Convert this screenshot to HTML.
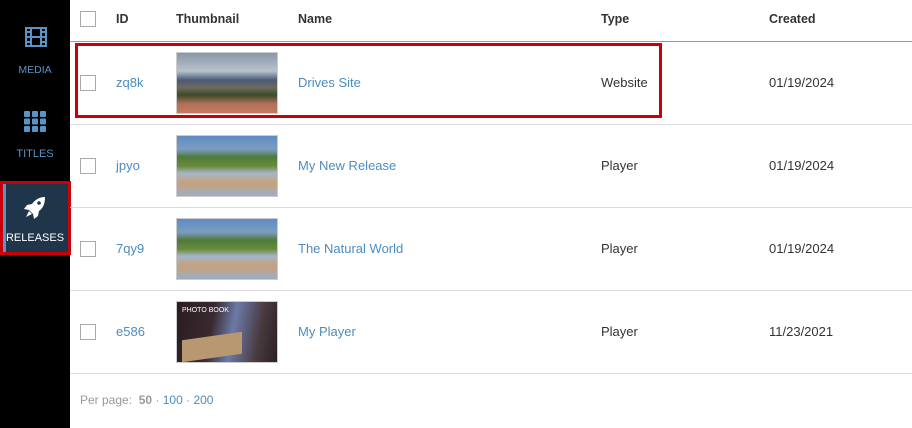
<!DOCTYPE html>
<html><head><style>
*{margin:0;padding:0;box-sizing:border-box}
body{width:912px;height:428px;overflow:hidden;background:#fff;font-family:"Liberation Sans",sans-serif;position:relative;font-size:13px;color:#333}
.sb{position:absolute;left:0;top:0;width:70px;height:428px;background:#000}
.lbl{position:absolute;width:70px;text-align:center;font-size:10.5px;color:#5b93c4}
.a{position:absolute}
.cb{position:absolute;left:80px;width:16px;height:16px;border:1px solid #aaa;background:#fff}
.link{color:#4c8cc0;position:absolute}
.hd{position:absolute;top:12px;font-weight:bold;font-size:12.5px;color:#333}
.line{position:absolute;left:70px;right:0;height:1px;background:#ddd}
.th{position:absolute;left:176px;width:102px;height:62px;border:1px solid #ccc}
.txt{position:absolute}
</style></head><body>
<div class="sb"></div>
<svg class="a" style="left:25px;top:27px" width="22" height="20" viewBox="0 0 22 20"><rect x="1" y="1" width="20" height="18" fill="none" stroke="#5b93c4" stroke-width="2"/><rect x="6" y="1" width="10" height="18" fill="none" stroke="#5b93c4" stroke-width="2"/><line x1="6" y1="10" x2="16" y2="10" stroke="#5b93c4" stroke-width="2"/><g fill="#5b93c4"><rect x="2" y="4" width="3" height="2"/><rect x="2" y="9" width="3" height="2"/><rect x="2" y="14" width="3" height="2"/><rect x="17" y="4" width="3" height="2"/><rect x="17" y="9" width="3" height="2"/><rect x="17" y="14" width="3" height="2"/></g></svg>
<div class="lbl" style="top:64px">MEDIA</div>
<svg class="a" style="left:24px;top:111px" width="22" height="21" viewBox="0 0 22 21" fill="#5b93c4"><rect x="0" y="0" width="6" height="6" rx="1"/><rect x="8" y="0" width="6" height="6" rx="1"/><rect x="16" y="0" width="6" height="6" rx="1"/><rect x="0" y="7.5" width="6" height="6" rx="1"/><rect x="8" y="7.5" width="6" height="6" rx="1"/><rect x="16" y="7.5" width="6" height="6" rx="1"/><rect x="0" y="15" width="6" height="6" rx="1"/><rect x="8" y="15" width="6" height="6" rx="1"/><rect x="16" y="15" width="6" height="6" rx="1"/></svg>
<div class="lbl" style="top:148px;font-size:11px">TITLES</div>
<div class="a" style="left:0;top:181px;width:71px;height:74px;border:3px solid #c8000a;background:#1f3549"></div>
<div class="a" style="left:3px;top:184px;width:3px;height:68px;background:#5b93c4"></div>
<svg class="a" style="left:23px;top:195px" width="24" height="24" viewBox="0 0 24 24"><path d="M22 2c-6 0-10 3-13 7l-5 1-3 4 5 1 4 4 1 5 4-3 1-5c4-3 6-7 6-14z" fill="#fff"/><circle cx="16" cy="8" r="1.8" fill="#1f3549"/><path d="M6 16l-3 6 6-3z" fill="#fff"/></svg>
<div class="lbl" style="top:232px;color:#fff;font-size:11px">RELEASES</div>

<div class="cb" style="top:11px"></div>
<div class="hd" style="left:116px">ID</div>
<div class="hd" style="left:176px">Thumbnail</div>
<div class="hd" style="left:298px">Name</div>
<div class="hd" style="left:601px">Type</div>
<div class="hd" style="left:769px">Created</div>
<div class="a" style="left:70px;right:0;top:41px;height:1px;background:#999"></div>

<div class="line" style="top:124px"></div>
<div class="line" style="top:207px"></div>
<div class="line" style="top:290px"></div>
<div class="line" style="top:373px"></div>

<div class="cb" style="top:75px"></div><div class="link" style="left:116px;top:75px">zq8k</div>
<div class="th" style="top:52px;background:linear-gradient(#8a97a6 0%,#b8c2cc 30%,#4d5a78 45%,#6d6a5c 58%,#3d4a2a 70%,#b4705a 85%,#c57a60 100%)"></div>
<div class="link" style="left:298px;top:75px">Drives Site</div>
<div class="txt" style="left:601px;top:75px">Website</div>
<div class="txt" style="left:769px;top:75px">01/19/2024</div>

<div class="cb" style="top:158px"></div><div class="link" style="left:116px;top:158px">jpyo</div>
<div class="th" style="top:135px;background:linear-gradient(#5d8cc4 0%,#7d9cc0 22%,#4f7a3c 35%,#6a8a3a 50%,#a6b6c8 62%,#c8a07a 78%,#9aafc6 100%)"></div>
<div class="link" style="left:298px;top:158px">My New Release</div>
<div class="txt" style="left:601px;top:158px">Player</div>
<div class="txt" style="left:769px;top:158px">01/19/2024</div>

<div class="cb" style="top:241px"></div><div class="link" style="left:116px;top:241px">7qy9</div>
<div class="th" style="top:218px;background:linear-gradient(#5d8cc4 0%,#7d9cc0 22%,#4f7a3c 35%,#6a8a3a 50%,#a6b6c8 62%,#c8a07a 78%,#9aafc6 100%)"></div>
<div class="link" style="left:298px;top:241px">The Natural World</div>
<div class="txt" style="left:601px;top:241px">Player</div>
<div class="txt" style="left:769px;top:241px">01/19/2024</div>

<div class="cb" style="top:324px"></div><div class="link" style="left:116px;top:324px">e586</div>
<div class="th" style="top:301px;background:linear-gradient(100deg,#2a1c22 0%,#3a2a30 35%,#6c7aa8 55%,#4a3a40 80%,#2a2024 100%)"><div style="position:absolute;left:5px;top:5px;color:#fff;font-size:7px">PHOTO BOOK</div><div style="position:absolute;left:5px;top:34px;width:60px;height:22px;background:#b89870;transform:skewY(-8deg)"></div></div>
<div class="link" style="left:298px;top:324px">My Player</div>
<div class="txt" style="left:601px;top:324px">Player</div>
<div class="txt" style="left:769px;top:324px">11/23/2021</div>

<div class="a" style="left:75px;top:43px;width:587px;height:75px;border:3px solid #c8000a"></div>

<div class="txt" style="left:80px;top:393px;color:#999;font-size:12px">Per page: &nbsp;<b style="color:#999">50</b> · <span style="color:#4c8cc0">100</span> · <span style="color:#4c8cc0">200</span></div>
</body></html>
